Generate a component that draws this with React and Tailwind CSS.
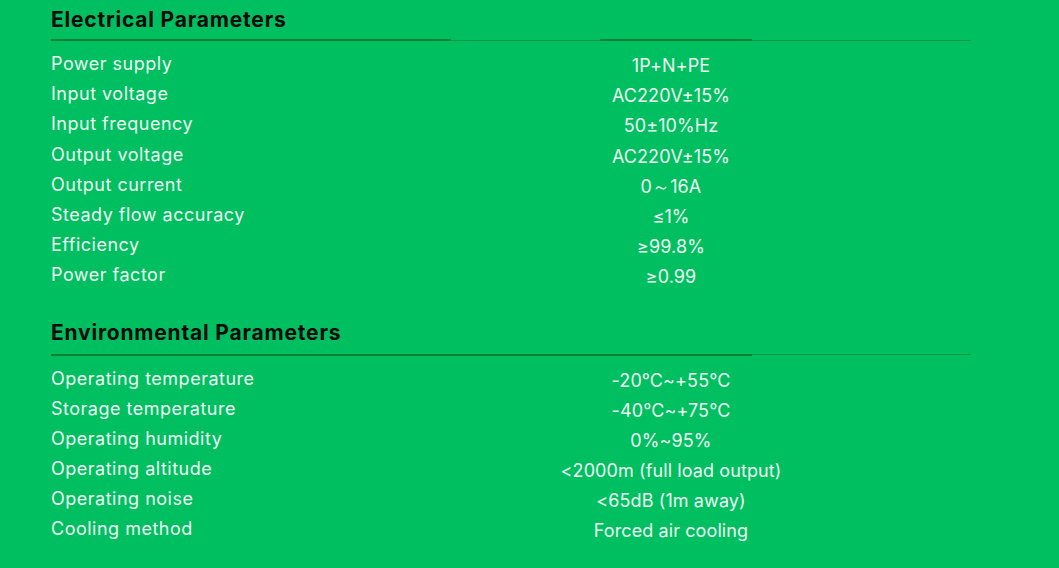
const electrical = [
  ['Power supply', '1P+N+PE'],
  ['Input voltage', 'AC220V±15%'],
  ['Input frequency', '50±10%Hz'],
  ['Output voltage', 'AC220V±15%'],
  ['Output current', '0～16A'],
  ['Steady flow accuracy', '≤1%'],
  ['Efficiency', '≥99.8%'],
  ['Power factor', '≥0.99'],
]

const environmental = [
  ['Operating temperature', '-20℃~+55℃'],
  ['Storage temperature', '-40℃~+75℃'],
  ['Operating humidity', '0%~95%'],
  ['Operating altitude', '<2000m (full load output)'],
  ['Operating noise', '<65dB (1m away)'],
  ['Cooling method', 'Forced air cooling'],
]

function Divider({ segments }) {
  return (
    <div className="flex h-[2px] items-center">
      {segments.map(([dark, width], i) => (
        <div
          key={i}
          className={dark ? 'h-[2px] bg-[#0a7f36]' : 'h-px bg-[#14963f]'}
          style={width ? { width } : { flex: 1 }}
        />
      ))}
    </div>
  )
}

function Section({ title, rows, segments, className = '', lineGap = 'mt-[7px]' }) {
  return (
    <section className={className}>
      <h2 className="text-[21px] font-bold leading-[24px] tracking-[0.8px] text-[#0b0b0b]">{title}</h2>
      <div className={lineGap}>
        <Divider segments={segments} />
      </div>
      <div className="mt-[8px]">
        {rows.map(([label, value]) => (
          <div key={label} className="grid h-[30.2px] grid-cols-[320px_600px] text-[18px] leading-[30.2px] text-[#eefcf3]">
            <span className="tracking-[0.5px]">{label}</span>
            <span className="translate-y-[2px] text-center tracking-[0.1px]">{value}</span>
          </div>
        ))}
      </div>
    </section>
  )
}

export default function App() {
  return (
    <div className="h-[568px] w-full bg-[#00bf60] pl-[51px] pt-[8px]" style={{ fontFamily: 'Inter, "Noto Sans", sans-serif' }}>
      <div className="w-[920px]">
        <Section
          title="Electrical Parameters"
          rows={electrical}
          segments={[[true, 400], [false, 149], [true, 152], [false, 0]]}
        />
        <Section
          title="Environmental Parameters"
          rows={environmental}
          segments={[[true, 701], [false, 0]]}
          className="mt-[30px]"
          lineGap="mt-[9px]"
        />
      </div>
    </div>
  )
}
